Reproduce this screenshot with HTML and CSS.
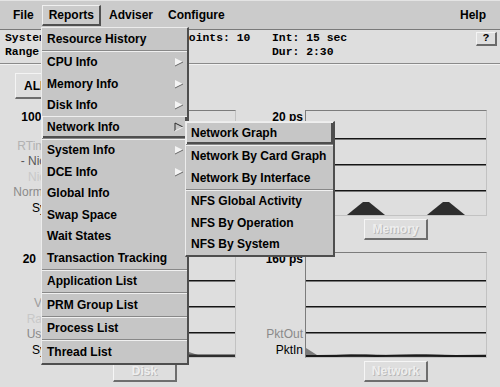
FILE: index.html
```html
<!DOCTYPE html>
<html>
<head>
<meta charset="utf-8">
<link rel="stylesheet" href="styles.css">
</head>
<body>
<div class="app">
  <div class="menubar">
    <span class="mb-item">File</span>
    <span class="mb-item active">Reports</span>
    <span class="mb-item">Adviser</span>
    <span class="mb-item">Configure</span>
    <span class="mb-item mb-help">Help</span>
  </div>
  <div class="info">
    <div><div>System: hpdev01</div><div>Range: 1 to 10</div></div>
    <div><div>Points: 10</div><div></div></div>
    <div><div>Int: 15 sec</div><div>Dur: 2:30</div></div>
    <div class="qbtn">?</div>
  </div>
  <div class="sep"></div>
  <div class="main">
    <div class="toolbar"><span class="raised-btn">ALL CPUs</span></div>
    <div class="panels">
      <div class="panel">
        <div class="labels">
          <div class="top-label">100%</div>
          <div class="legend">
            <div class="c-lt">RTime</div>
            <div class="c-dk">- Nice</div>
            <div class="c-vlt">Nice</div>
            <div class="c-md">Normal</div>
            <div class="c-bk">Sys</div>
          </div>
        </div>
        <div class="graph">
          <svg width="180" height="104" viewBox="0 0 180 104">
            <g class="grid"><line x1="0" y1="27.75" x2="180" y2="27.75"/><line x1="0" y1="53.75" x2="180" y2="53.75"/><line x1="0" y1="79.75" x2="180" y2="79.75"/></g>
          </svg>
        </div>
        <div class="gbtn">CPU</div>
      </div>
      <div class="panel">
        <div class="labels">
          <div class="top-label">20 ps</div>
          <div class="legend">
            <div class="c-md">Out</div>
            <div class="c-bk">In</div>
          </div>
        </div>
        <div class="graph">
          <svg width="180" height="104" viewBox="0 0 180 104">
            <g class="grid"><line x1="0" y1="27.75" x2="180" y2="27.75"/><line x1="0" y1="53.75" x2="180" y2="53.75"/><line x1="0" y1="79.75" x2="180" y2="79.75"/></g>
            <polygon class="data" points="41,104 57,91 63,91 79,104"/>
            <polygon class="data" points="121,104 137,91 143,91 159,104"/>
          </svg>
        </div>
        <div class="gbtn">Memory</div>
      </div>
      <div class="panel">
        <div class="labels">
          <div class="top-label">20&ensp;/s</div>
          <div class="legend">
            <div class="c-mdl">VM</div>
            <div class="c-vlt">Ram</div>
            <div class="c-md">User</div>
            <div class="c-bk">Sys</div>
          </div>
        </div>
        <div class="graph">
          <svg width="180" height="104" viewBox="0 0 180 104">
            <g class="grid"><line x1="0" y1="27.75" x2="180" y2="27.75"/><line x1="0" y1="53.75" x2="180" y2="53.75"/><line x1="0" y1="79.75" x2="180" y2="79.75"/></g>
            <polygon class="data-gray" points="134,99 143,102 134,102"/>
            <polygon class="data" points="0,101.5 180,101.5 180,104 0,104"/>
          </svg>
        </div>
        <div class="gbtn">Disk</div>
      </div>
      <div class="panel">
        <div class="labels">
          <div class="top-label">160 ps</div>
          <div class="legend">
            <div class="c-md">PktOut</div>
            <div class="c-bk">PktIn</div>
          </div>
        </div>
        <div class="graph">
          <svg width="180" height="104" viewBox="0 0 180 104">
            <g class="grid"><line x1="0" y1="27.75" x2="180" y2="27.75"/><line x1="0" y1="53.75" x2="180" y2="53.75"/><line x1="0" y1="79.75" x2="180" y2="79.75"/></g>
            <polygon class="data-gray" points="0,95 11,102 60,101 80,102 120,101 150,102 180,101.5 180,104 0,104"/>
            <polyline class="data-line" points="0,103 30,103 45,102.5 70,103 110,102.5 140,103 180,103"/>
          </svg>
        </div>
        <div class="gbtn">Network</div>
      </div>
    </div>
  </div>

  <div class="menu dropdown">
    <div class="mi"><span>Resource History</span></div>
    <div class="msep"></div>
    <div class="mi"><span>CPU Info</span><svg class="arr" width="10" height="10" viewBox="0 0 10 10"><polygon points="1,1 9,5 1,9" fill="#f4f4f4"/><line x1="1" y1="9" x2="9" y2="5" stroke="#666"/></svg></div>
    <div class="mi"><span>Memory Info</span><svg class="arr" width="10" height="10" viewBox="0 0 10 10"><polygon points="1,1 9,5 1,9" fill="#f4f4f4"/><line x1="1" y1="9" x2="9" y2="5" stroke="#666"/></svg></div>
    <div class="mi"><span>Disk Info</span><svg class="arr" width="10" height="10" viewBox="0 0 10 10"><polygon points="1,1 9,5 1,9" fill="#f4f4f4"/><line x1="1" y1="9" x2="9" y2="5" stroke="#666"/></svg></div>
    <div class="mi hl"><span>Network Info</span><svg class="arr" width="10" height="10" viewBox="0 0 10 10"><polygon points="1,1 9,5 1,9" fill="#c6c6c6"/><polyline points="1,9 1,1 9,5" fill="none" stroke="#2a2a2a"/><line x1="1" y1="9" x2="9" y2="5" stroke="#f0f0f0"/></svg></div>
    <div class="msep"></div>
    <div class="mi"><span>System Info</span><svg class="arr" width="10" height="10" viewBox="0 0 10 10"><polygon points="1,1 9,5 1,9" fill="#f4f4f4"/><line x1="1" y1="9" x2="9" y2="5" stroke="#666"/></svg></div>
    <div class="mi"><span>DCE Info</span><svg class="arr" width="10" height="10" viewBox="0 0 10 10"><polygon points="1,1 9,5 1,9" fill="#f4f4f4"/><line x1="1" y1="9" x2="9" y2="5" stroke="#666"/></svg></div>
    <div class="mi"><span>Global Info</span></div>
    <div class="mi"><span>Swap Space</span></div>
    <div class="mi"><span>Wait States</span></div>
    <div class="mi"><span>Transaction Tracking</span></div>
    <div class="msep"></div>
    <div class="mi"><span>Application List</span></div>
    <div class="msep"></div>
    <div class="mi"><span>PRM Group List</span></div>
    <div class="msep"></div>
    <div class="mi"><span>Process List</span></div>
    <div class="msep"></div>
    <div class="mi"><span>Thread List</span></div>
  </div>

  <div class="menu submenu">
    <div class="mi hl"><span>Network Graph</span></div>
    <div class="msep"></div>
    <div class="mi"><span>Network By Card Graph</span></div>
    <div class="mi"><span>Network By Interface</span></div>
    <div class="msep"></div>
    <div class="mi"><span>NFS Global Activity</span></div>
    <div class="mi"><span>NFS By Operation</span></div>
    <div class="mi"><span>NFS By System</span></div>
  </div>
</div>
</body>
</html>
```

FILE: styles.css
```css
* { box-sizing: border-box; }

body {
  margin: 0;
  background: #dedede;
  font-family: "Liberation Sans", Arial, sans-serif;
  font-size: 12px;
  color: #000;
}

.app {
  position: relative;
  width: 500px;
  height: 387px;
  overflow: hidden;
  background: #dedede;
}

/* menu bar */
.menubar {
  display: flex;
  align-items: center;
  gap: 1px;
  height: 30px;
  padding: 0 7px 0 6px;
  background: #cbcbcb;
  border-top: 1px solid #e4e4e4;
  border-bottom: 1px solid #7a7a7a;
  font-weight: bold;
}

.mb-item {
  height: 21px;
  line-height: 18px;
  padding: 0 5px 0 6px;
  border: 1px solid transparent;
  border-right-width: 2px;
  border-bottom-width: 2px;
  white-space: nowrap;
}

.mb-item.active {
  border-color: #f0f0f0 #505050 #505050 #f0f0f0;
}

.mb-help { margin-left: auto; }

/* info row */
.info {
  display: grid;
  grid-template-columns: 177px 90px 1fr auto;
  height: 33px;
  padding: 1px 3px 0 5px;
  font-family: "Liberation Mono", "Courier New", monospace;
  font-weight: bold;
  font-size: 11.4px;
  line-height: 14px;
  white-space: nowrap;
}

.qbtn {
  width: 21px;
  height: 14px;
  margin-top: 1px;
  border: 1px solid;
  border-color: #f4f4f4 #6a6a6a #6a6a6a #f4f4f4;
  border-width: 1px 2px 2px 1px;
  font-size: 11px;
  line-height: 11px;
  text-align: center;
}

.sep {
  height: 2px;
  border-top: 1px solid #8a8a8a;
  border-bottom: 1px solid #f2f2f2;
}

/* main */
.main { padding-top: 8px; }

.toolbar {
  height: 26px;
  margin-bottom: 11px;
  padding-left: 15px;
}

.raised-btn {
  display: inline-flex;
  align-items: center;
  height: 26px;
  padding: 0 14px 0 8px;
  border: 1px solid;
  border-color: #f4f4f4 #6e6e6e #6e6e6e #f4f4f4;
  border-width: 1px 2px 2px 1px;
  font-weight: bold;
}

.panels {
  display: grid;
  grid-template-columns: 232px 232px;
  column-gap: 19px;
  row-gap: 12px;
  padding-left: 4px;
}

.panel {
  display: grid;
  grid-template-columns: 48px 182px;
  column-gap: 2px;
}

.labels {
  height: 106px;
  display: flex;
  flex-direction: column;
  justify-content: space-between;
  text-align: right;
  line-height: 14px;
  white-space: nowrap;
}

.top-label { font-weight: bold; }

.legend div { line-height: 15.5px; }

.c-lt { color: #b2b2b2; }
.c-vlt { color: #c8c8c8; }
.c-dk { color: #575757; }
.c-md { color: #8a8a8a; }
.c-mdl { color: #9c9c9c; }
.c-bk { color: #000; }

.graph {
  width: 182px;
  height: 106px;
  border: 1px solid;
  border-color: #7c7c7c #c2c2c2 #c2c2c2 #7c7c7c;
}

.graph svg { display: block; }

.grid line {
  stroke: #151515;
  stroke-width: 1.5;
}

.data { fill: #2e2e2e; }
.data-gray { fill: #7a7a7a; }
.data-line { fill: none; stroke: #1a1a1a; stroke-width: 2; }

.gbtn {
  grid-column: 2;
  justify-self: center;
  width: 64px;
  height: 21px;
  margin-top: 3px;
  display: flex;
  align-items: center;
  justify-content: center;
  border: 1px solid;
  border-color: #f6f6f6 #6e6e6e #6e6e6e #f6f6f6;
  border-width: 1px 2px 2px 1px;
  color: #eeeeee;
  text-shadow: 1px 1px 0 #b8b8b8;
  font-weight: bold;
}

/* pull-down menus */
.menu {
  position: absolute;
  background: #c6c6c6;
  border: 1px solid;
  border-color: #ececec #4e4e4e #4e4e4e #ececec;
  border-width: 1px 2px 2px 1px;
  font-weight: bold;
}

.dropdown {
  left: 41px;
  top: 27px;
  width: 148px;
}

.submenu {
  left: 185px;
  top: 121px;
  width: 150px;
}

.mi {
  height: 21.5px;
  display: flex;
  align-items: center;
  justify-content: space-between;
  padding: 0 3px 0 5px;
  white-space: nowrap;
}

.mi.hl {
  box-shadow: inset 1px 1px 0 #efefef, inset -2px -2px 0 #4e4e4e;
}

.arr { display: block; }

.msep {
  height: 2px;
  border-top: 1px solid #888888;
  border-bottom: 1px solid #f0f0f0;
}
```
